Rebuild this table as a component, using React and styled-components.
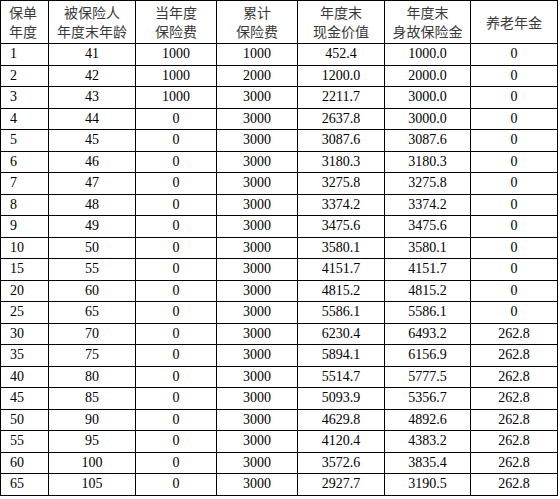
import React from 'react';
import styled, { createGlobalStyle } from 'styled-components';

const GlobalStyle = createGlobalStyle`
  body {
    margin: 0;
    background: #fff;
  }
`;

const Table = styled.table`
  border-collapse: collapse;
  table-layout: fixed;
  width: 557px;
  font-family: "Liberation Serif", "Noto Sans CJK SC", serif;
  font-size: 14px;
  color: #000;
`;

const HeadCell = styled.th`
  border: 1px solid #000;
  height: 42px;
  padding: 0;
  padding-left: ${p => (p.$left ? '8px' : '0')};
  text-align: ${p => (p.$left ? 'left' : 'center')};
  font-family: "Noto Sans CJK SC", sans-serif;
  font-weight: normal;
  font-size: 14px;
  line-height: 19px;
  color: #3a3a3a;
`;

const Row = styled.tr`
  height: 21.5px;
`;

const Cell = styled.td`
  border: 1px solid #000;
  padding: 0;
  padding-left: ${p => (p.$left ? '9px' : '0')};
  text-align: ${p => (p.$left ? 'left' : 'center')};
  line-height: 18px;
`;

const widths = [48, 87, 81, 81, 87, 86, 87];

const headers = [
  ['保单', '年度'],
  ['被保险人', '年度末年龄'],
  ['当年度', '保险费'],
  ['累计', '保险费'],
  ['年度末', '现金价值'],
  ['年度末', '身故保险金'],
  ['养老年金'],
];

const rows = [
  [1, 41, 1000, 1000, '452.4', '1000.0', '0'],
  [2, 42, 1000, 2000, '1200.0', '2000.0', '0'],
  [3, 43, 1000, 3000, '2211.7', '3000.0', '0'],
  [4, 44, 0, 3000, '2637.8', '3000.0', '0'],
  [5, 45, 0, 3000, '3087.6', '3087.6', '0'],
  [6, 46, 0, 3000, '3180.3', '3180.3', '0'],
  [7, 47, 0, 3000, '3275.8', '3275.8', '0'],
  [8, 48, 0, 3000, '3374.2', '3374.2', '0'],
  [9, 49, 0, 3000, '3475.6', '3475.6', '0'],
  [10, 50, 0, 3000, '3580.1', '3580.1', '0'],
  [15, 55, 0, 3000, '4151.7', '4151.7', '0'],
  [20, 60, 0, 3000, '4815.2', '4815.2', '0'],
  [25, 65, 0, 3000, '5586.1', '5586.1', '0'],
  [30, 70, 0, 3000, '6230.4', '6493.2', '262.8'],
  [35, 75, 0, 3000, '5894.1', '6156.9', '262.8'],
  [40, 80, 0, 3000, '5514.7', '5777.5', '262.8'],
  [45, 85, 0, 3000, '5093.9', '5356.7', '262.8'],
  [50, 90, 0, 3000, '4629.8', '4892.6', '262.8'],
  [55, 95, 0, 3000, '4120.4', '4383.2', '262.8'],
  [60, 100, 0, 3000, '3572.6', '3835.4', '262.8'],
  [65, 105, 0, 3000, '2927.7', '3190.5', '262.8'],
];

export default function App() {
  return (
    <>
      <GlobalStyle />
      <Table>
        <colgroup>
          {widths.map((w, i) => <col key={i} style={{ width: w }} />)}
        </colgroup>
        <thead>
          <tr>
            {headers.map((h, i) => (
              <HeadCell key={i} $left={i === 0}>
                {h.map((line, j) => <div key={j}>{line}</div>)}
              </HeadCell>
            ))}
          </tr>
        </thead>
        <tbody>
          {rows.map((r, i) => (
            <Row key={i}>
              {r.map((v, j) => <Cell key={j} $left={j === 0}>{v}</Cell>)}
            </Row>
          ))}
        </tbody>
      </Table>
    </>
  );
}
